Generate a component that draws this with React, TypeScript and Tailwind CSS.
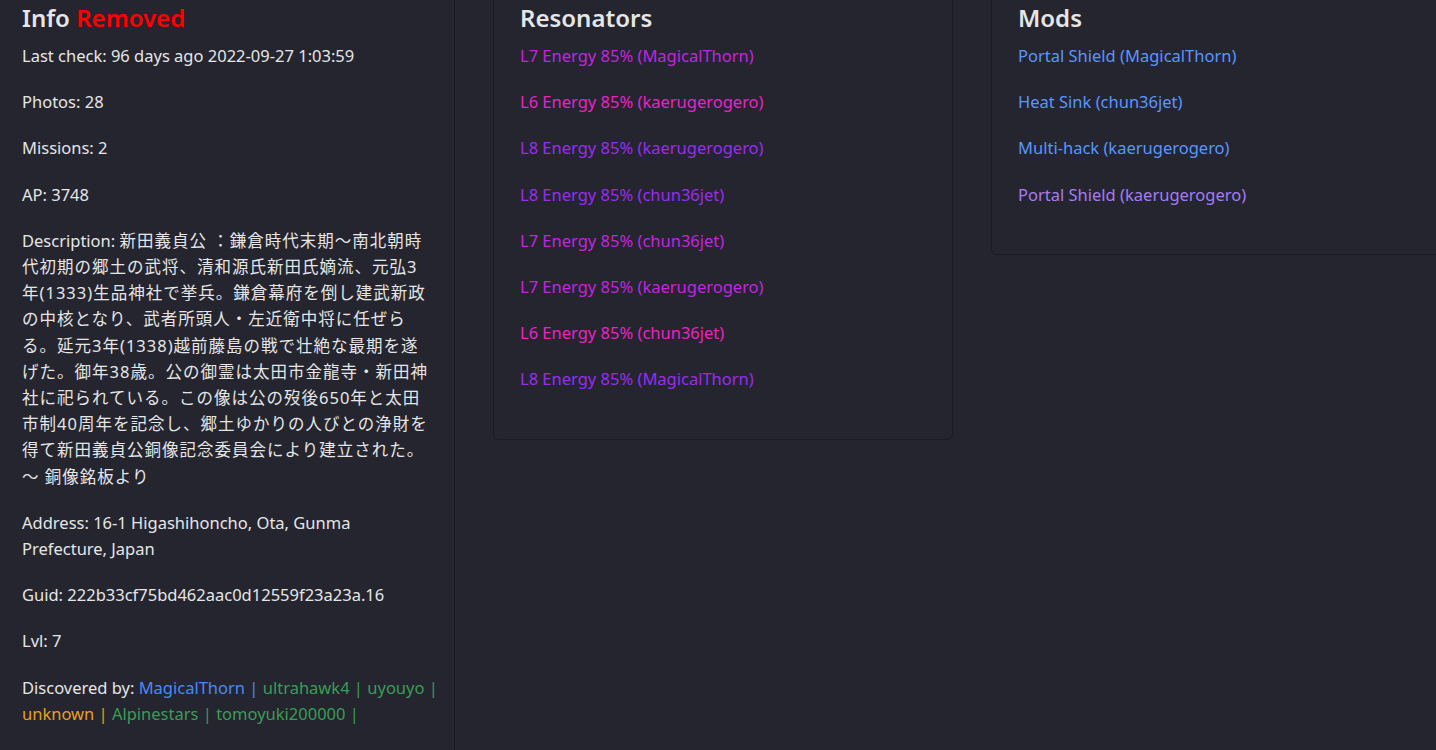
import React from "react";

const font = { fontFamily: '"Noto Sans", "Noto Sans CJK JP", sans-serif' };

const resonators: [string, string][] = [
  ["L7 Energy 85% (MagicalThorn)", "text-[#c324e0]"],
  ["L6 Energy 85% (kaerugerogero)", "text-[#ea22c8]"],
  ["L8 Energy 85% (kaerugerogero)", "text-[#9a2cf2]"],
  ["L8 Energy 85% (chun36jet)", "text-[#9a2cf2]"],
  ["L7 Energy 85% (chun36jet)", "text-[#c324e0]"],
  ["L7 Energy 85% (kaerugerogero)", "text-[#c324e0]"],
  ["L6 Energy 85% (chun36jet)", "text-[#ea22c8]"],
  ["L8 Energy 85% (MagicalThorn)", "text-[#9a2cf2]"],
];

const mods: [string, string][] = [
  ["Portal Shield (MagicalThorn)", "text-[#5b95ff]"],
  ["Heat Sink (chun36jet)", "text-[#5b95ff]"],
  ["Multi-hack (kaerugerogero)", "text-[#5b95ff]"],
  ["Portal Shield (kaerugerogero)", "text-[#a67cf5]"],
];

const descLines = [
  "代初期の郷土の武将、清和源氏新田氏嫡流、元弘3",
  "年(1333)生品神社で挙兵。鎌倉幕府を倒し建武新政",
  "の中核となり、武者所頭人・左近衛中将に任ぜら",
  "る。延元3年(1338)越前藤島の戦で壮絶な最期を遂",
  "げた。御年38歳。公の御霊は太田市金龍寺・新田神",
  "社に祀られている。この像は公の歿後650年と太田",
  "市制40周年を記念し、郷土ゆかりの人びとの浄財を",
  "得て新田義貞公銅像記念委員会により建立された。",
  "～ 銅像銘板より",
];

function P({ children, className = "" }: { children: React.ReactNode; className?: string }) {
  return <p className={`mb-[20px] leading-[26.2px] ${className}`}>{children}</p>;
}

function H({ children }: { children: React.ReactNode }) {
  return <h2 className="text-[24px] font-semibold leading-[32px] mb-[9px] text-[#e6e6e6]">{children}</h2>;
}

export default function App() {
  return (
    <div className="w-[1436px] h-[750px] overflow-hidden bg-[#24252f] text-[#e6e6e6] text-[16.5px]" style={font}>
      <div className="flex items-start gap-[38px] ml-[-5px] mt-[-15px]">
        <div className="w-[460px] shrink-0 h-[800px] border border-[#1a1b23] rounded-md pt-[16px] px-[26px]">
          <H>
            Info <span className="text-[#ff0000]">Removed</span>
          </H>
          <P>Last check: 96 days ago 2022-09-27 1:03:59</P>
          <P>Photos: 28</P>
          <P>Missions: 2</P>
          <P>AP: 3748</P>
          <P>
            <span className="block whitespace-nowrap">
              Description: <span className="tracking-[1px]">新田義貞公 ：鎌倉時代末期～南北朝時</span>
            </span>
            {descLines.map((l, i) => (
              <span key={i} className="block whitespace-nowrap tracking-[1px]">
                {l}
              </span>
            ))}
          </P>
          <P>Address: 16-1 Higashihoncho, Ota, Gunma Prefecture, Japan</P>
          <P>Guid: 222b33cf75bd462aac0d12559f23a23a.16</P>
          <P>Lvl: 7</P>
          <P>
            <span className="block whitespace-nowrap">
              Discovered by: <span className="text-[#4a8af4]">MagicalThorn |</span>{" "}
              <span className="text-[#3a9d55]">ultrahawk4 |</span>{" "}
              <span className="text-[#3a9d55]">uyouyo |</span>
            </span>
            <span className="block whitespace-nowrap">
              <span className="text-[#e8a020]">unknown |</span>{" "}
              <span className="text-[#3a9d55]">Alpinestars |</span>{" "}
              <span className="text-[#3a9d55]">tomoyuki200000 |</span>
            </span>
          </P>
        </div>
        <div className="w-[460px] shrink-0 border border-[#1a1b23] rounded-md pt-[16px] px-[26px] pb-[26px]">
          <H>Resonators</H>
          {resonators.map(([t, c], i) => (
            <P key={i} className={c}>
              {t}
            </P>
          ))}
        </div>
        <div className="w-[460px] shrink-0 border border-[#1a1b23] rounded-md pt-[16px] px-[26px] pb-[26px]">
          <H>Mods</H>
          {mods.map(([t, c], i) => (
            <P key={i} className={c}>
              {t}
            </P>
          ))}
        </div>
      </div>
    </div>
  );
}
